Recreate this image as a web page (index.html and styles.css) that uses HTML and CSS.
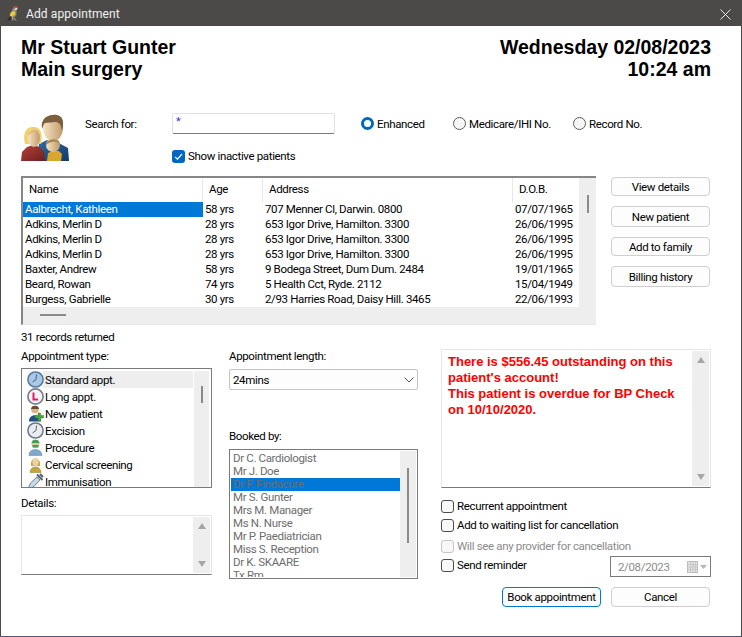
FILE: index.html
```html
<!DOCTYPE html>
<html lang="en">
<head>
<meta charset="utf-8">
<title>Add appointment</title>
<link rel="stylesheet" href="styles.css">
</head>
<body>
<div class="window">
  <header class="titlebar">
    <svg class="app-icon" width="12" height="16" viewBox="0 0 12 16"><path d="M2 14 L3 9 L5 5 L7 1.5 L10 1 L11 3 L9.5 5 L9.5 10 L7 13 Z" fill="#8f8674"/><path d="M7 1.5 L10 1 L10.5 2.5 L8 3.5 Z" fill="#d8382a"/><path d="M8 3.5 L10.5 3 L9.5 5 L7.5 5 Z" fill="#eeeeee"/><path d="M3.5 8 L7.5 5.5 L8.5 9 L5 12 L3 11 Z" fill="#e8cf3a"/><path d="M3 11 L0.5 15.5 L3 15 L5 12 Z" fill="#2a2a2a"/><path d="M7 13 L9 15.5 M5.5 13 L6 15.5" stroke="#d9d2c0" stroke-width=".8"/></svg>
    <span class="title">Add appointment</span>
    <svg class="close" width="11" height="11" viewBox="0 0 11 11"><path d="M.5 .5 L10.5 10.5 M10.5 .5 L.5 10.5" stroke="#e8e8e8" stroke-width="1" fill="none"/></svg>
  </header>
  <main class="content">
    <section class="heading">
      <div>Mr Stuart Gunter<br>Main surgery</div>
      <div class="heading-right">Wednesday 02/08/2023<br>10:24 am</div>
    </section>

    <section class="search">
      <svg class="family" width="48" height="48" viewBox="0 0 48 48">
        <defs>
          <linearGradient id="skin" x1="0" y1="0" x2="1" y2="0"><stop offset="0" stop-color="#f6e3c4"/><stop offset="1" stop-color="#c29a6a"/></linearGradient>
          <linearGradient id="coat" x1="0" y1="0" x2="1" y2="1"><stop offset="0" stop-color="#2f6ea8"/><stop offset="1" stop-color="#123a66"/></linearGradient>
          <linearGradient id="red" x1="0" y1="0" x2="1" y2="1"><stop offset="0" stop-color="#b8413a"/><stop offset="1" stop-color="#6d1f1d"/></linearGradient>
        </defs>
        <path d="M16 47 L18 30 L26 26 L34 27 L47 34 L48 47 Z" fill="url(#coat)"/>
        <path d="M28 26 L33 33 L37 26 Z" fill="#e9e3d6"/>
        <ellipse cx="32" cy="14" rx="10" ry="13" fill="url(#skin)"/>
        <path d="M21 15 C19 3 29 0 36 1 C43 2 43 10 41 17 C40 10 38 8 34 8 C28 9 24 8 23 10 Z" fill="#7b5f3f"/>
        <path d="M0 47 L1 38 L6 33 L12 31 L19 33 L23 38 L24 47 Z" fill="url(#red)"/>
        <path d="M4 30 C1 18 6 12 13 13 C20 13 22 20 20 30 Z" fill="#f0d272"/>
        <ellipse cx="13" cy="24" rx="6" ry="9" fill="url(#skin)"/>
        <path d="M7 22 C8 16 15 15 19 20 C16 16 10 17 7 22 Z" fill="#d9b34c"/>
        <path d="M26 47 L27 39 L32 37 L38 37 L41 40 L40 47 Z" fill="#d9a72e"/>
        <circle cx="32" cy="31" r="7" fill="url(#skin)"/>
        <path d="M25 31 C25 24 38 23 39 30 C35 27 30 27 25 31 Z" fill="#a98a55"/>
      </svg>
      <div class="search-label">Search for:</div>
      <div class="search-fields">
        <div class="search-top">
          <div class="search-input">*</div>
          <label class="radio radio-on r-enh"><i></i>Enhanced</label>
          <label class="radio r-med"><i></i>Medicare/IHI No.</label>
          <label class="radio"><i></i>Record No.</label>
        </div>
        <label class="check check-on inactive"><i><svg width="13" height="13" viewBox="0 0 13 13"><path d="M3 6.8 L5.4 9.2 L10 4" stroke="#fff" stroke-width="1.2" fill="none"/></svg></i>Show inactive patients</label>
      </div>
    </section>

    <section class="results">
      <div class="table">
        <div class="table-main">
          <div class="thead row">
            <div>Name</div><div>Age</div><div>Address</div><div>D.O.B.</div>
          </div>
          <div class="tbody">
            <div class="row selected"><div>Aalbrecht, Kathleen</div><div>58 yrs</div><div>707 Menner Cl, Darwin. 0800</div><div>07/07/1965</div></div>
            <div class="row"><div>Adkins, Merlin D</div><div>28 yrs</div><div>653 Igor Drive, Hamilton. 3300</div><div>26/06/1995</div></div>
            <div class="row"><div>Adkins, Merlin D</div><div>28 yrs</div><div>653 Igor Drive, Hamilton. 3300</div><div>26/06/1995</div></div>
            <div class="row"><div>Adkins, Merlin D</div><div>28 yrs</div><div>653 Igor Drive, Hamilton. 3300</div><div>26/06/1995</div></div>
            <div class="row"><div>Baxter, Andrew</div><div>58 yrs</div><div>9 Bodega Street, Dum Dum. 2484</div><div>19/01/1965</div></div>
            <div class="row"><div>Beard, Rowan</div><div>74 yrs</div><div>5 Health Cct, Ryde. 2112</div><div>15/04/1949</div></div>
            <div class="row"><div>Burgess, Gabrielle</div><div>30 yrs</div><div>2/93 Harries Road, Daisy Hill. 3465</div><div>22/06/1993</div></div>
          </div>
          <div class="hscroll"><span></span></div>
        </div>
        <div class="vscroll"><span></span></div>
      </div>
      <div class="side-buttons">
        <button class="btn b19">View details</button>
        <button class="btn b21">New patient</button>
        <button class="btn b19">Add to family</button>
        <button class="btn b21">Billing history</button>
      </div>
    </section>

    <div class="count">31 records returned</div>

    <section class="lower">
      <div class="col-left">
        <div class="label">Appointment type:</div>
        <div class="types">
          <ul class="type-list">
            <li class="active"><svg width="17" height="17" viewBox="0 0 17 17"><circle cx="8.5" cy="8.5" r="7.6" fill="#a9c8e6" stroke="#56789c" stroke-width="1.5"/><path d="M9.5 3.5 L9 8.5 L5.5 11" stroke="#4a5f78" fill="none"/></svg>Standard appt.</li>
            <li><svg width="17" height="17" viewBox="0 0 17 17"><circle cx="8.5" cy="8.5" r="7.6" fill="#f4f4f6" stroke="#7a828e" stroke-width="1.7"/><path d="M6.5 4.5 V11.5 H11" stroke="#e8196b" stroke-width="2" fill="none"/></svg>Long appt.</li>
            <li><svg width="17" height="17" viewBox="0 0 17 17"><circle cx="8" cy="4.5" r="3.8" fill="#d9b58a"/><path d="M4 4 C4 -.5 12 -.5 12 4 Z" fill="#6a4d30"/><path d="M2 16.5 C1.5 8 14 8 14 16.5 Z" fill="#24508a"/><path d="M11 8 H13.5 V10.5 H16.5 V13 H13.5 V16 H11 V13 H8 V10.5 H11 Z" fill="#49a63c" stroke="#2f7a28" stroke-width=".5"/></svg>New patient</li>
            <li><svg width="17" height="17" viewBox="0 0 17 17"><circle cx="8.5" cy="8.5" r="7.6" fill="#e9edf2" stroke="#6d7785" stroke-width="1.5"/><path d="M9.5 3.5 L9 8.5 L5.5 11" stroke="#5a6470" fill="none"/></svg>Excision</li>
            <li><svg width="17" height="17" viewBox="0 0 17 17"><ellipse cx="8.5" cy="4.8" rx="4" ry="4.3" fill="#e3c49c"/><path d="M4.5 4 C4.5 -.5 12.5 -.5 12.5 4 Z" fill="#3fa25a"/><path d="M5.5 6 H11.5 V8.5 H5.5 Z" fill="#3fa25a"/><path d="M2 16.5 C1.5 8.5 15 8.5 15 16.5 Z" fill="#7da9cf" stroke="#5b86ad" stroke-width=".5"/></svg>Procedure</li>
            <li><svg width="17" height="17" viewBox="0 0 17 17"><path d="M4 10 C2.5 0 14.5 0 13 10 Z" fill="#cfa53f"/><ellipse cx="8.5" cy="6" rx="3" ry="4" fill="#ecd3a6"/><path d="M3 16.5 C3 9 14 9 14 16.5 Z" fill="#c2a53e" stroke="#8f7a2a" stroke-width=".5"/></svg>Cervical screening</li>
            <li><svg width="17" height="17" viewBox="0 0 17 17"><path d="M1 16 L3.5 10 L10 4 L13 7 L7 13.5 Z" fill="#c6d8e2" stroke="#6c8391"/><path d="M10 1.5 L15.5 7 M13 1 L16 4" stroke="#55626c" stroke-width="2"/></svg>Immunisation</li>
          </ul>
          <div class="vscroll type-scroll"><span></span></div>
        </div>
        <div class="label details-label">Details:</div>
        <div class="memo details">
          <div class="memo-body"></div>
          <div class="arrows"><b class="up"></b><b class="down"></b></div>
        </div>
      </div>

      <div class="col-mid">
        <div class="label">Appointment length:</div>
        <div class="combo"><span>24mins</span><svg width="10" height="6" viewBox="0 0 10 6"><path d="M.5 .5 L5 5 L9.5 .5" stroke="#555" fill="none"/></svg></div>
        <div class="label booked-label">Booked by:</div>
        <div class="providers">
          <ul class="provider-list">
            <li>Dr C. Cardiologist</li>
            <li>Mr J. Doe</li>
            <li class="selected">Dr F. Findacure</li>
            <li>Mr S. Gunter</li>
            <li>Mrs M. Manager</li>
            <li>Ms N. Nurse</li>
            <li>Mr P. Paediatrician</li>
            <li>Miss S. Reception</li>
            <li>Dr K. SKAARE</li>
            <li>Tx Rm</li>
          </ul>
          <div class="vscroll provider-scroll"><span></span></div>
        </div>
      </div>

      <div class="col-right">
        <div class="memo alert">
          <div class="memo-body alert-text">There is $556.45 outstanding on this patient's account!<br>This patient is overdue for BP Check on 10/10/2020.</div>
          <div class="arrows"><b class="up"></b><b class="down"></b></div>
        </div>
        <label class="check c-rec"><i></i>Recurrent appointment</label>
        <label class="check c-wait"><i></i>Add to waiting list for cancellation</label>
        <label class="check disabled c-any"><i></i>Will see any provider for cancellation</label>
        <div class="reminder-row">
          <label class="check c-send"><i></i>Send reminder</label>
          <div class="date">
            <span>2/08/2023</span>
            <svg width="21" height="12" viewBox="0 0 21 12"><rect x=".5" y=".5" width="10" height="11" fill="#e4e4e4" stroke="#bdbdbd"/><path d="M1 3.5 H10 M1 6 H10 M1 8.5 H10 M3.5 1 V11 M6 1 V11 M8.5 1 V11" stroke="#c8c8c8"/><path d="M13 4 H20 L16.5 8 Z" fill="#b5b5b5"/></svg>
          </div>
        </div>
        <div class="actions">
          <button class="btn primary">Book appointment</button>
          <button class="btn">Cancel</button>
        </div>
      </div>
    </section>
  </main>
</div>
</body>
</html>
```
FILE: styles.css
```css
* { box-sizing: border-box; }
html, body { margin: 0; padding: 0; }
body { background: #fff; color: #000; font: 11.5px/16px Roboto, sans-serif; letter-spacing: -.35px; }
ul { list-style: none; margin: 0; padding: 0; }

.window { width: 742px; height: 637px; border: 1px solid #4b4a48; border-top: 0; border-bottom-color: #55557a; overflow: hidden; }
.titlebar { height: 26px; margin: 0 -1px; background: #4b4a48; color: #f2f2f2; font-size: 12px; display: flex; align-items: center; padding: 2px 11px 0 7px; letter-spacing: .12px; }
.app-icon { margin: 0 7px 3px 0; }
.title { flex: 1; }

.content { padding-left: 20px; }

.heading { display: flex; justify-content: space-between; padding: 10px 30px 0 0; font: bold 19.5px/22px "Liberation Sans", sans-serif; letter-spacing: 0; }
.heading-right { text-align: right; }

.search { display: flex; margin-top: 33px; height: 63px; }
.family { flex: none; margin-top: 1px; }
.search-label { width: 87px; margin: 3px 0 0 16px; }
.search-fields { display: flex; flex-direction: column; }
.search-top { display: flex; align-items: center; }
.search-input { width: 163px; height: 21px; border: 1px solid #e2e2e2; border-bottom-color: #7a7a7a; border-radius: 2px; color: #4a2fd0; padding-left: 3px; margin-right: 26px; font-size: 11px; line-height: 16px; }
.radio { display: flex; align-items: center; gap: 3px; }
.radio i { width: 13px; height: 13px; border: 1px solid #5c5c5c; border-radius: 50%; background: #f6f6f6; }
.radio-on i { border: 3.5px solid #0067c0; background: #fff; }
.r-enh { width: 92px; }
.r-med { width: 120px; }

.check { display: flex; align-items: center; gap: 3px; }
.check i { flex: none; width: 13px; height: 13px; border: 1px solid #4d4d4d; border-radius: 3px; background: #f8f8f8; }
.check-on i { border: 0; background: #0067c0; display: block; line-height: 0; }
.inactive { margin-top: 14px; }
.disabled { color: #8c8c8c; }
.disabled i { border-color: #c6c6c6; }

.results { display: flex; margin-top: 0; }
.table { width: 575px; height: 149px; display: flex; border-top: 2px solid #868686; border-left: 2px solid #868686; border-bottom: 1px solid #e6e6e6; }
.table-main { width: 556px; display: flex; flex-direction: column; }
.row { display: grid; grid-template-columns: 180px 60px 250px 66px; height: 15px; line-height: 15px; white-space: nowrap; }
.row > div { padding-left: 2px; }
.thead { height: 24px; line-height: 23px; }
.thead > div { padding-left: 6px; height: 24px; border-right: 1px solid #e8e8e8; }
.thead > div:last-child { border-right: 0; }
.selected { background: #0078d7; }
.row.selected { background: linear-gradient(#0078d7, #0078d7) left / 180px 100% no-repeat; }
.row.selected > div:first-child { color: #fff; }
.tbody { height: 105px; }
.hscroll { flex: 1; background: #eee; }
.hscroll span { display: block; width: 26px; height: 2px; margin: 7px 0 0 17px; background: #8a8a8a; }
.vscroll { flex: 1; background: #eee; }
.vscroll span { display: block; width: 2px; height: 18px; margin: 17px 0 0 8px; background: #8a8a8a; }

.side-buttons { display: flex; flex-direction: column; width: 99px; margin: 1px 0 0 15px; gap: 10px; }
.btn { font: inherit; letter-spacing: inherit; color: #000; background: #fdfdfd; border: 1px solid #cfcfcf; border-radius: 4px; padding: 0; width: 99px; height: 20px; line-height: 16px; white-space: nowrap; }
.b19 { height: 19px; }
.b21 { height: 21px; }

.count { margin-top: 4px; height: 16px; }

.lower { display: grid; grid-template-columns: 191px 189px 276px; column-gap: 17px; margin-top: 3px; }
.col-right { margin-left: 6px; width: 270px; padding-top: 1px; }
.label { height: 16px; }
.types { margin-top: 4px; width: 191px; height: 120px; border: 1px solid #7a7a7a; display: flex; padding: 2px 2px 0; overflow: hidden; }
.type-list { width: 170px; height: 118px; overflow: hidden; }
.type-list li { height: 17px; line-height: 18px; display: flex; white-space: nowrap; padding-left: 3px; gap: 1px; }
.type-list li svg { flex: none; }
.type-list .active { background: linear-gradient(#eee, #eee) 19px 0 / 150px 100% no-repeat; }
.type-scroll { flex: 1; height: 116px; }
.type-scroll span { margin: 15px 0 0 7px; height: 17px; }

.details-label { margin-top: 7px; }
.memo { display: flex; border: 1px solid #e6e6e6; border-bottom: 1px solid #7a7a7a; padding: 1px; }
.details { margin-top: 4px; width: 191px; height: 60px; }
.memo-body { flex: 1; }
.arrows { width: 17px; background: #eee; display: flex; flex-direction: column; justify-content: space-between; align-items: center; padding: 6px 0; }
.arrows b { width: 0; height: 0; border-left: 4px solid transparent; border-right: 4px solid transparent; }
.arrows .up { border-bottom: 6px solid #a6a6a6; }
.arrows .down { border-top: 6px solid #a6a6a6; }

.combo { margin-top: 5px; height: 21px; border: 1px solid #c4c4c4; border-radius: 2px; background: #fdfdfd; display: flex; align-items: center; justify-content: space-between; padding: 0 3px; }
.booked-label { margin-top: 38px; }
.providers { margin-top: 5px; height: 130px; border: 1px solid #7a7a7a; display: flex; padding: 1px; overflow: hidden; }
.provider-list { width: 169px; height: 126px; overflow: hidden; color: #6d6d6d; padding-top: 1px; }
.provider-list li { height: 13px; line-height: 13px; padding-left: 2px; white-space: nowrap; }
.provider-scroll { flex: 1; height: 126px; }
.provider-scroll span { width: 2px; height: 75px; margin: 17px 0 0 7px; }

.alert { width: 270px; height: 139px; }
.alert-text { padding: 3px 5px; font: bold 13px/16px "Liberation Sans", sans-serif; letter-spacing: 0; color: #ff0000; }
.c-rec { margin-top: 10px; }
.c-wait { margin-top: 3px; }
.c-any { margin-top: 5px; }
.c-send { margin-top: 1px; }
.reminder-row { display: flex; justify-content: space-between; align-items: flex-start; width: 270px; margin-top: 2px; }
.date { width: 101px; height: 21px; border: 1px solid #7a7a7a; color: #8c8c8c; display: flex; align-items: center; justify-content: space-between; padding: 0 2px 0 7px; }
.actions { display: flex; justify-content: flex-end; gap: 10px; margin: 10px 1px 0 0; }
.primary { border-color: #0078d7; }
```
